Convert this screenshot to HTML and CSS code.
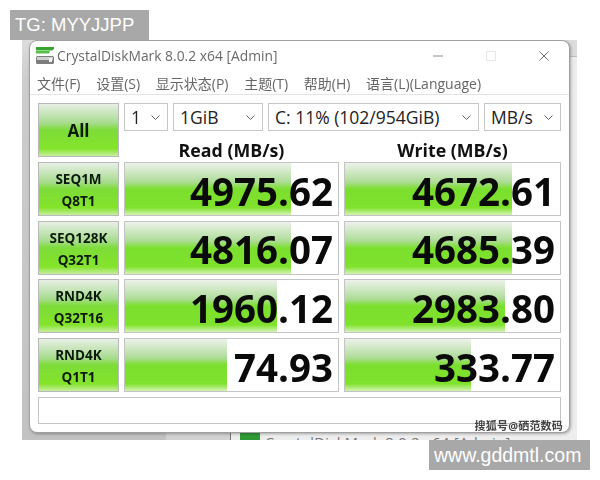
FILE: index.html
```html
<!DOCTYPE html>
<html lang="zh">
<head>
<meta charset="utf-8">
<title>CrystalDiskMark</title>
<link rel="stylesheet" href="styles.css">
</head>
<body>
<div class="stage">
  <div class="mark mark-tg">TG: MYYJJPP</div>
  <div class="backdrop">
    <div class="shade-left"></div>
    <div class="shade-mid"></div>
    <div class="peek">
      <svg class="peek-icon" width="20" height="8" viewBox="0 0 20 8"><rect width="20" height="8" fill="#2f9a35"/></svg>
      <span>CrystalDiskMark 8.0.2 x64 [Admin]</span>
    </div>
    <div class="window">
      <div class="titlebar">
        <svg class="app-icon" width="19" height="19" viewBox="0 0 19 19">
          <path d="M0 1h18v2l-2 1.500H0z" fill="#35a52f"/>
          <path d="M0 5h14l-1 2.500H0z" fill="#58c04a"/>
          <rect x="0" y="10" width="18" height="8" rx="1.500" fill="#7d7d7d"/>
          <rect x="1" y="11" width="16" height="3" fill="#cfcfcf"/>
          <rect x="13" y="12" width="3" height="4" fill="#f2f2f2"/>
        </svg>
        <span class="title">CrystalDiskMark 8.0.2 x64 [Admin]</span>
        <div class="controls">
          <svg width="12" height="12" viewBox="0 0 12 12"><path d="M1 6h10" stroke="#8a8a8a" stroke-width="1"/></svg>
          <svg width="12" height="12" viewBox="0 0 12 12"><rect x="1.500" y="1.500" width="9" height="9" fill="none" stroke="#e6e6e6"/></svg>
          <svg width="12" height="12" viewBox="0 0 12 12"><path d="M1.500 1.500l9 9M10.500 1.500l-9 9" stroke="#777" stroke-width="1"/></svg>
        </div>
      </div>
      <nav class="menu">
        <span>文件(F)</span><span>设置(S)</span><span>显示状态(P)</span><span>主题(T)</span><span>帮助(H)</span><span>语言(L)(Language)</span>
      </nav>
      <main class="panel">
        <div class="grid">
          <button class="btn btn-all">All</button>
          <div class="top">
            <div class="selects">
              <div class="select s1"><span>1</span><svg width="9" height="5" viewBox="0 0 9 5"><path d="M.5.500l4 4 4-4" fill="none" stroke="#666"/></svg></div>
              <div class="select s2"><span>1GiB</span><svg width="9" height="5" viewBox="0 0 9 5"><path d="M.5.500l4 4 4-4" fill="none" stroke="#666"/></svg></div>
              <div class="select s3"><span>C: 11% (102/954GiB)</span><svg width="9" height="5" viewBox="0 0 9 5"><path d="M.5.500l4 4 4-4" fill="none" stroke="#666"/></svg></div>
              <div class="select s4"><span>MB/s</span><svg width="9" height="5" viewBox="0 0 9 5"><path d="M.5.500l4 4 4-4" fill="none" stroke="#666"/></svg></div>
            </div>
            <div class="heads"><div>Read (MB/s)</div><div>Write (MB/s)</div></div>
          </div>

          <button class="btn btn-row"><span>SEQ1M</span><span>Q8T1</span></button>
          <div class="cell"><div class="bar" style="width:78%"></div><span class="val">4975.62</span></div>
          <div class="cell"><div class="bar" style="width:77.500%"></div><span class="val">4672.61</span></div>

          <button class="btn btn-row"><span>SEQ128K</span><span>Q32T1</span></button>
          <div class="cell"><div class="bar" style="width:78%"></div><span class="val">4816.07</span></div>
          <div class="cell"><div class="bar" style="width:77.500%"></div><span class="val">4685.39</span></div>

          <button class="btn btn-row"><span>RND4K</span><span>Q32T16</span></button>
          <div class="cell"><div class="bar" style="width:71.500%"></div><span class="val">1960.12</span></div>
          <div class="cell"><div class="bar" style="width:74.400%"></div><span class="val">2983.80</span></div>

          <button class="btn btn-row"><span>RND4K</span><span>Q1T1</span></button>
          <div class="cell"><div class="bar" style="width:48%"></div><span class="val">74.93</span></div>
          <div class="cell"><div class="bar" style="width:58.600%"></div><span class="val">333.77</span></div>
        </div>
        <div class="comment"></div>
      </main>
      <div class="sohu">搜狐号@硒范数码</div>
    </div>
  </div>
  <div class="mark mark-url">www.gddmtl.com</div>
</div>
</body>
</html>
```
FILE: styles.css
```css
* { box-sizing: border-box; }
html, body { margin: 0; background: #fff; }
body { font-family: "Open Sans", "Noto Sans CJK SC", sans-serif; }
.stage { position: relative; width: 600px; height: 480px; padding: 40px 0 0 22px; overflow: hidden; }
.backdrop { position: relative; width: 555px; height: 400px; padding-left: 7px; background: linear-gradient(#dcdcdc 0 16px, #bdbdbd 16px 17px, #ececec 17px); overflow: hidden; }
.shade-left { position: absolute; left: 0; top: 0; width: 144px; height: 100%; background: linear-gradient(#dcdcdc, #cdcdcd 10%, #c2c2c2); }
.shade-mid { position: absolute; left: 144px; top: 0; width: 64px; height: 100%; background: linear-gradient(#e4e4e4, #d2d2d2); }
.peek { position: absolute; left: 208px; top: 390px; width: 347px; height: 30px; background: #eeeeee; border-left: 1px solid #777; padding-left: 9px; display: flex; gap: 5px; align-items: flex-start; font-size: 14.600px; color: #777; }
.peek span { letter-spacing: .4px; margin-top: 2px; white-space: nowrap; }
.peek-icon { margin-top: 3px; }
.window { position: relative; width: 541px; height: 393px; background: #fff; border: 1px solid #a0a0a0; border-radius: 8px; box-shadow: 1px 1px 3px rgba(0,0,0,.3); filter: blur(.35px); overflow: hidden; }
.titlebar { display: flex; align-items: center; height: 29px; padding: 0 0 0 6px; }
.app-icon { margin-right: 2px; }
.title { font-size: 13.850px; color: #6a6a6a; white-space: nowrap; }
.controls { margin-left: auto; display: flex; gap: 41px; padding-right: 19px; }
.menu { display: flex; height: 25px; align-items: center; padding: 1px 0 0 7px; font-size: 14px; color: #666; border-bottom: 1px solid #e4e4e4; gap: 15.700px; white-space: nowrap; }
.panel { padding: 8px 8px 0; }
.grid { display: grid; grid-template-columns: 81px 215px 217px; gap: 4.700px 5px; grid-template-rows: 54.300px repeat(4, 54px); }
.btn { margin: 0; padding: 0; font-family: inherit; border: 1px solid #b9b9b9; color: #0c1a0c; background: linear-gradient(#e8efe5 0%, #a8dc90 36%, #7ddc38 50%, #84e42a 86%, #c6ee9f 100%); font-weight: 700; }
.btn-all { font-size: 17px; }
.btn-row { font-size: 13.500px; display: flex; flex-direction: column; align-items: center; justify-content: center; gap: 4px; padding-top: 2px; }
.top { grid-column: 2 / 4; display: flex; flex-direction: column; }
.selects { display: flex; gap: 5px; height: 28px; }
.select { display: flex; align-items: center; justify-content: space-between; height: 28px; border: 1px solid #c6c6c6; background: #fff; font-size: 17.500px; color: #222; padding: 0 7px 0 6px; white-space: nowrap; }
.s1 { width: 44px; }
.s2 { width: 90px; }
.s3 { width: 211px; }
.s4 { width: 77px; }
.heads { display: grid; grid-template-columns: 215px 217px; gap: 5px; margin-top: 10px; font-size: 17.800px; font-weight: 700; color: #111; text-align: center; line-height: 18px; }
.cell { position: relative; border: 1px solid #c4c4c4; background: #fff; overflow: hidden; }
.bar { height: 100%; background: linear-gradient(#edf2eb 0%, #aedc98 36%, #7bdf2e 50%, #7fe22c 86%, #d5f3b6 100%); }
.val { position: absolute; right: 5px; top: 53%; transform: translateY(-50%); font-size: 38.500px; font-weight: 700; color: #0a0a0a; line-height: 1; }
.comment { margin-top: 4.500px; height: 27px; border: 1px solid #c4c4c4; }
.sohu { position: absolute; right: 6px; bottom: 0; font-size: 11px; line-height: 12px; font-weight: 700; letter-spacing: .2px; color: #444; text-shadow: 0 0 1px #fff; }
.mark { position: absolute; background: #a8a8a8; color: #fff; z-index: 2; white-space: nowrap; font-family: "Liberation Sans", sans-serif; }
.mark-tg { left: 10px; top: 10px; width: 139px; height: 30px; font-size: 18.500px; line-height: 30px; padding-left: 5px; }
.mark-url { left: 429px; top: 440px; width: 161px; height: 30px; font-size: 19.500px; line-height: 30px; padding-left: 5px; }
```
